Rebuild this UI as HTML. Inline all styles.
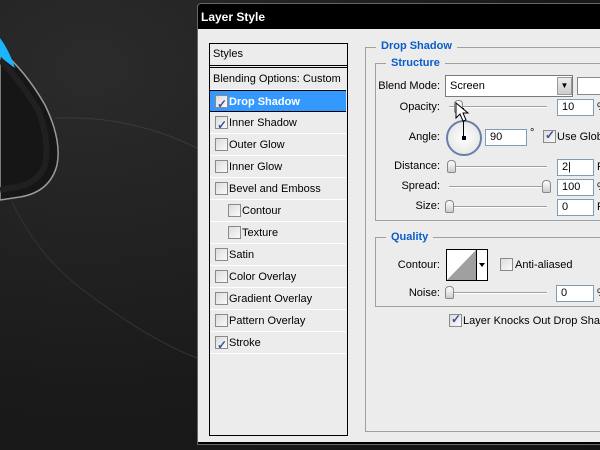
<!DOCTYPE html>
<html><head><style>
*{margin:0;padding:0;box-sizing:border-box}
html,body{width:600px;height:450px;overflow:hidden}
body{position:relative;background:radial-gradient(ellipse at 15% 15%,#2b2b2b,#1a1a1a 60%,#131313);font-family:"Liberation Sans",sans-serif;font-size:11px;color:#000;white-space:nowrap}
.a{position:absolute}
.cb{position:absolute;width:13px;height:13px;border:1px solid #8a8a8a;background:linear-gradient(135deg,#dcdcdc,#fafafa)}
.ck::after{content:"✓";position:absolute;left:1px;top:-3px;font-size:12px;color:#3a4fa0;font-weight:bold}
.row{position:absolute;left:0;width:136px;height:22px;border-bottom:1px solid #fff;line-height:22px}
.row span{position:absolute;left:19px}
.row .cb{left:5px;top:4px}
.inp{position:absolute;background:#fff;border:1px solid #7f9db9;height:17px;line-height:15px;padding-left:4px;font-size:11px}
.track{position:absolute;height:2px;background:#c8c8c8;border-bottom:1px solid #fff;border-top:1px solid #a0a0a0}
.thumb{position:absolute;width:9px;height:13px;border:1px solid #888;border-radius:4px 4px 2px 2px;background:linear-gradient(#fff,#ccc)}
.lbl{position:absolute;text-align:right;width:80px}
.grp{position:absolute;border:1px solid #a0a0a0;border-right:none}
.gt{position:absolute;background:#ececec;color:#0a5cc8;font-weight:bold;padding:0 5px}
#clip{position:absolute;left:0;top:0;width:600px;height:450px;overflow:hidden}
</style></head><body><div id="clip">
<svg class="a" style="left:0;top:0" width="200" height="450">
<path d="M55 118 Q130 115 197 148" stroke="#3a3a3a" stroke-width="1" fill="none"/>
<path d="M12 202 Q40 260 90 295 Q150 340 197 358" stroke="#333" stroke-width="1" fill="none"/>
<path d="M0 50 Q25 70 45 105 Q62 140 57 165 Q50 192 20 197 L0 200Z" fill="#161616" stroke="#9a9a9a" stroke-width="1.5"/>
<path d="M0 60 Q20 80 38 110 Q50 140 45 165 Q38 185 10 188 L0 190" fill="none" stroke="#202020" stroke-width="6"/>
<path d="M0 38 Q9 50 15 68 Q6 62 0 56Z" fill="#1ab4ff"/>
</svg>
<div class="a" style="left:197px;top:3px;width:403px;height:442px;background:#000;border:1px solid #666;border-right:none;border-radius:4px 0 0 0"></div>
<div class="a" style="left:201px;top:10px;color:#fff;font-weight:bold;font-size:12px">Layer Style</div>
<div class="a" style="left:198px;top:29px;width:402px;height:413px;background:#ececec"></div>
<div class="a" style="left:209px;top:43px;width:139px;height:393px;border:1px solid #000;background:#ececec">
<div class="a" style="left:3px;top:4px">Styles</div>
<div class="a" style="left:0;top:21px;width:137px;height:3px;border-top:1px solid #000;border-bottom:1px solid #000"></div>
<div class="row" style="top:24px"><span style="left:3px">Blending Options: Custom</span></div>
<div class="row" style="top:46px;background:#3399ff;color:#fff;font-weight:bold;border-bottom:1px solid #000;border-top:1px solid #000"><div class="cb ck"></div><span>Drop Shadow</span></div>
<div class="row" style="top:68px"><div class="cb ck"></div><span>Inner Shadow</span></div>
<div class="row" style="top:90px"><div class="cb"></div><span>Outer Glow</span></div>
<div class="row" style="top:112px"><div class="cb"></div><span>Inner Glow</span></div>
<div class="row" style="top:134px"><div class="cb"></div><span>Bevel and Emboss</span></div>
<div class="row" style="top:156px"><div class="cb" style="left:18px"></div><span style="left:32px">Contour</span></div>
<div class="row" style="top:178px"><div class="cb" style="left:18px"></div><span style="left:32px">Texture</span></div>
<div class="row" style="top:200px"><div class="cb"></div><span>Satin</span></div>
<div class="row" style="top:222px"><div class="cb"></div><span>Color Overlay</span></div>
<div class="row" style="top:244px"><div class="cb"></div><span>Gradient Overlay</span></div>
<div class="row" style="top:266px"><div class="cb"></div><span>Pattern Overlay</span></div>
<div class="row" style="top:288px"><div class="cb ck"></div><span>Stroke</span></div>
</div>
<div class="grp" style="left:365px;top:47px;width:235px;height:385px"></div>
<div class="gt" style="left:376px;top:40px">Drop Shadow</div>
<div class="grp" style="left:375px;top:63px;width:225px;height:158px"></div>
<div class="gt" style="left:386px;top:57px">Structure</div>
<div class="lbl" style="left:360px;top:80px">Blend Mode:</div>
<div class="inp" style="left:445px;top:75px;width:128px;height:22px;line-height:20px;border-color:#7a7a7a">Screen</div>
<div class="a" style="left:557px;top:77px;width:15px;height:18px;background:linear-gradient(#eee,#ccc);border:1px solid #999;text-align:center;font-size:8px;line-height:16px">▼</div>
<div class="inp" style="left:577px;top:77px;width:23px;height:18px;border-color:#888;border-right:none"></div>
<div class="lbl" style="left:360px;top:101px">Opacity:</div>
<div class="track" style="left:449px;top:106px;width:98px"></div>
<div class="thumb" style="left:454px;top:100px"></div>
<div class="inp" style="left:557px;top:99px;width:37px">10</div><div class="a" style="left:597px;top:101px">%</div>
<div class="lbl" style="left:360px;top:131px">Angle:</div>
<div class="a" style="left:446px;top:120px;width:36px;height:36px;border-radius:50%;border:2px solid #6a7fa8;background:radial-gradient(#fff,#e0e0e0)"></div>
<div class="a" style="left:463px;top:108px;width:1px;height:30px;background:#000"></div>
<div class="a" style="left:462px;top:136px;width:4px;height:4px;background:#000"></div>
<svg class="a" style="left:455px;top:102px" width="16" height="22"><path d="M1 1 L1 16 L5 12 L8 19 L11 18 L8 11 L13 11Z" fill="#fff" stroke="#000" stroke-width="1"/></svg>
<div class="inp" style="left:485px;top:129px;width:42px">90</div><div class="a" style="left:530px;top:127px">°</div>
<div class="cb ck" style="left:543px;top:130px"></div><div class="a" style="left:557px;top:131px">Use Globa</div>
<div class="lbl" style="left:360px;top:160px">Distance:</div>
<div class="track" style="left:449px;top:166px;width:98px"></div><div class="thumb" style="left:447px;top:160px"></div>
<div class="inp" style="left:557px;top:159px;width:37px">2|</div><div class="a" style="left:597px;top:161px">P</div>
<div class="lbl" style="left:360px;top:180px">Spread:</div>
<div class="track" style="left:449px;top:186px;width:98px"></div><div class="thumb" style="left:542px;top:180px"></div>
<div class="inp" style="left:557px;top:179px;width:37px">100</div><div class="a" style="left:597px;top:181px">%</div>
<div class="lbl" style="left:360px;top:200px">Size:</div>
<div class="track" style="left:449px;top:206px;width:98px"></div><div class="thumb" style="left:445px;top:200px"></div>
<div class="inp" style="left:557px;top:199px;width:37px">0</div><div class="a" style="left:597px;top:201px">P</div>
<div class="grp" style="left:375px;top:237px;width:225px;height:70px"></div>
<div class="gt" style="left:386px;top:231px">Quality</div>
<div class="lbl" style="left:360px;top:259px">Contour:</div>
<svg class="a" style="left:446px;top:249px" width="42" height="32"><rect x="0.5" y="0.5" width="41" height="31" fill="#fff" stroke="#000"/><path d="M1 31 L30 1 L30 31Z" fill="#a0a0a0"/><line x1="30.5" y1="0" x2="30.5" y2="32" stroke="#000"/><path d="M33 14 L39 14 L36 18Z" fill="#000"/></svg>
<div class="cb" style="left:500px;top:258px"></div><div class="a" style="left:515px;top:259px">Anti-aliased</div>
<div class="lbl" style="left:360px;top:287px">Noise:</div>
<div class="track" style="left:449px;top:292px;width:98px"></div><div class="thumb" style="left:445px;top:286px"></div>
<div class="inp" style="left:556px;top:285px;width:38px">0</div><div class="a" style="left:597px;top:287px">%</div>
<div class="cb ck" style="left:449px;top:314px"></div><div class="a" style="left:463px;top:315px;width:137px;overflow:hidden">Layer Knocks Out Drop Shadow</div>
</div></body></html>
